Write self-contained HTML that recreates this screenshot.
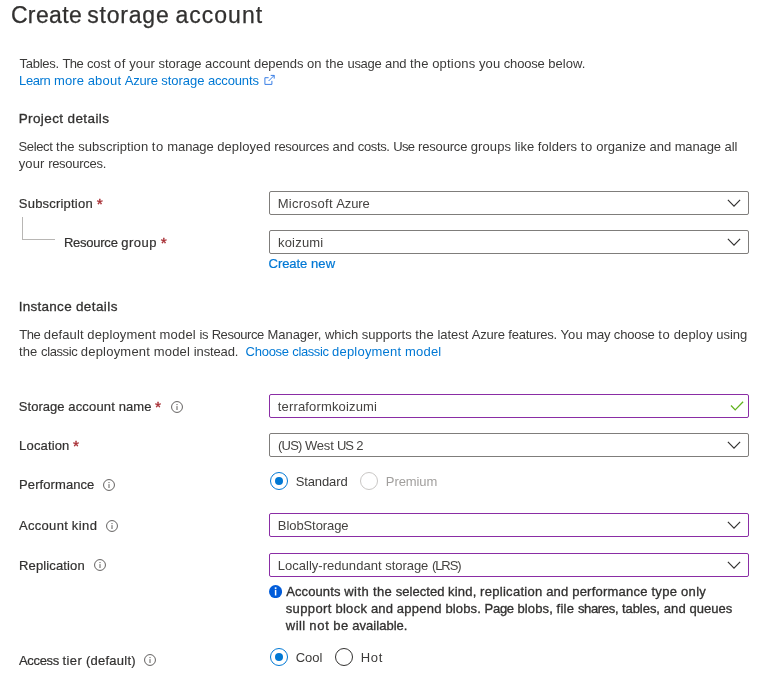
<!DOCTYPE html>
<html><head><meta charset="utf-8"><title>Create storage account</title>
<style>
html,body{margin:0;padding:0;background:#fff;}
body{width:779px;height:678px;position:relative;overflow:hidden;font-family:"Liberation Sans",sans-serif;font-size:13px;color:#3b3a39;}
#w{position:absolute;left:0;top:0;width:779px;height:678px;will-change:transform;}
.t{position:absolute;white-space:nowrap;line-height:17px;height:17px;}
.w{display:inline-block;white-space:pre;}
.h1{font-size:23px;line-height:30px;height:30px;color:#323130;-webkit-text-stroke:0.25px #323130;}
.sb{font-size:13.5px;color:#323130;-webkit-text-stroke:0.3px #323130;}
.sm{color:#323130;-webkit-text-stroke:0.32px #323130;}
.sl{-webkit-text-stroke:0.22px #0078d4;}
.lbl{color:#323130;-webkit-text-stroke:0.2px #323130;}
.a{color:#0078d4;}
.v{color:#454341;}
.req{position:absolute;color:#a4262c;-webkit-text-stroke:0.3px #a4262c;font-size:15.5px;line-height:17px;height:17px;}
.box{position:absolute;left:269px;width:478px;height:22px;border:1px solid #7f7d7b;border-radius:2px;background:#fff;}
.box.p{border-color:#8a2da5;}
.chev{position:absolute;right:7.45px;top:7.05px;width:14px;height:9px;}
.info{position:absolute;width:12px;height:12px;}
.radio{position:absolute;width:18px;height:18px;border:1px solid #323130;border-radius:50%;box-sizing:border-box;}
.radio.on{border-color:#0078d4;border-width:1.2px;}
.radio.on::after{content:"";position:absolute;left:50%;top:50%;width:8.4px;height:8.4px;margin:-4.2px 0 0 -4.2px;border-radius:50%;background:#0078d4;}
.radio.dis{border-color:#c8c6c4;}
</style></head><body><div id="w">
<div class="box" style="top:191px;"><svg class="chev" viewBox="0 0 14 9" fill="none" stroke="#323130" stroke-width="1.15"><path d="M0.9 0.8L7 7.2L13.1 0.8"/></svg></div>
<div class="box" style="top:230px;"><svg class="chev" viewBox="0 0 14 9" fill="none" stroke="#323130" stroke-width="1.15"><path d="M0.9 0.8L7 7.2L13.1 0.8"/></svg></div>
<div class="box p" style="top:394px;"><svg style="position:absolute;left:458px;top:4px" width="18" height="13" viewBox="0 0 18 13" fill="none" stroke="#62b31f" stroke-width="1.3"><path d="M3 6.5L7.2 10.9L15.1 2.8"/></svg></div>
<div class="box" style="top:433px;"><svg class="chev" viewBox="0 0 14 9" fill="none" stroke="#323130" stroke-width="1.15"><path d="M0.9 0.8L7 7.2L13.1 0.8"/></svg></div>
<div class="box p" style="top:513px;"><svg class="chev" viewBox="0 0 14 9" fill="none" stroke="#323130" stroke-width="1.15"><path d="M0.9 0.8L7 7.2L13.1 0.8"/></svg></div>
<div class="box p" style="top:553px;"><svg class="chev" viewBox="0 0 14 9" fill="none" stroke="#323130" stroke-width="1.15"><path d="M0.9 0.8L7 7.2L13.1 0.8"/></svg></div>
<div style="position:absolute;left:22px;top:217px;width:32px;height:22px;border-left:1px solid #b8b6b4;border-bottom:1px solid #b8b6b4;"></div>
<svg style="position:absolute;left:262.5px;top:74px" width="13" height="13" viewBox="0 0 13 13" fill="none" stroke="#2f78e4" stroke-width="0.95"><path d="M5.6 3.7H1.9V10.4H8.9V6.9"/><path d="M7.7 1.4H11.2V4.6"/><path d="M11.2 1.4L5.6 7"/></svg>
<div id="title" style="position:absolute;left:0;top:0;width:300px;height:30px;"><span class="t h1" id="title1" style="left:10.91px;top:0px;letter-spacing:0.351px;">Create</span> <span class="t h1" id="title2" style="left:87.26px;top:0px;letter-spacing:0.789px;">storage</span> <span class="t h1" id="title3" style="left:175.56px;top:0px;letter-spacing:0.993px;">account</span></div>
<div class="t " id="tables" style="left:19.55px;top:55px;"><span class="w" style="width:42.87px;letter-spacing:-0.270px">Tables. </span><span class="w" style="width:24.50px;letter-spacing:-0.486px">The </span><span class="w" style="width:27.08px;letter-spacing:-0.081px">cost </span><span class="w" style="width:15.23px;letter-spacing:0.416px">of </span><span class="w" style="width:29.29px;letter-spacing:0.109px">your </span><span class="w" style="width:46.63px;letter-spacing:-0.043px">storage </span><span class="w" style="width:48.88px;letter-spacing:-0.033px">account </span><span class="w" style="width:52.91px;letter-spacing:-0.077px">depends </span><span class="w" style="width:18.52px;letter-spacing:0.246px">on </span><span class="w" style="width:22.10px;letter-spacing:0.155px">the </span><span class="w" style="width:37.45px;letter-spacing:-0.305px">usage </span><span class="w" style="width:25.15px;letter-spacing:-0.036px">and </span><span class="w" style="width:22.10px;letter-spacing:0.155px">the </span><span class="w" style="width:46.82px;letter-spacing:0.192px">options </span><span class="w" style="width:24.78px;letter-spacing:0.084px">you </span><span class="w" style="width:44.43px;letter-spacing:-0.175px">choose </span><span class="w" style="letter-spacing:0.083px">below.</span></div>
<div class="t a" id="learn" style="left:19.05px;top:72px;"><span class="w" style="width:34.95px;letter-spacing:-0.372px">Learn </span><span class="w" style="width:33.68px;letter-spacing:0.123px">more </span><span class="w" style="width:37.17px;letter-spacing:0.213px">about </span><span class="w" style="width:36.48px;letter-spacing:-0.209px">Azure </span><span class="w" style="width:46.64px;letter-spacing:-0.041px">storage </span><span class="w" style="letter-spacing:-0.150px">accounts</span></div>
<div class="t sb" id="proj" style="left:18.68px;top:109.6px;"><span class="w" style="width:48.79px;letter-spacing:0.393px">Project </span><span class="w" style="letter-spacing:0.420px">details</span></div>
<div class="t " id="select" style="left:18.47px;top:138px;"><span class="w" style="width:37.65px;letter-spacing:-0.343px">Select </span><span class="w" style="width:22.14px;letter-spacing:0.166px">the </span><span class="w" style="width:73.50px;letter-spacing:0.046px">subscription </span><span class="w" style="width:15.60px;letter-spacing:0.594px">to </span><span class="w" style="width:49.83px;letter-spacing:-0.119px">manage </span><span class="w" style="width:57.16px;letter-spacing:0.102px">deployed </span><span class="w" style="width:58.26px;letter-spacing:-0.265px">resources </span><span class="w" style="width:25.20px;letter-spacing:-0.024px">and </span><span class="w" style="width:35.47px;letter-spacing:-0.344px">costs. </span><span class="w" style="width:24.83px;letter-spacing:-0.621px">Use </span><span class="w" style="width:52.74px;letter-spacing:-0.176px">resource </span><span class="w" style="width:43.89px;letter-spacing:0.096px">groups </span><span class="w" style="width:23.14px;letter-spacing:0.014px">like </span><span class="w" style="width:42.91px;letter-spacing:0.045px">folders </span><span class="w" style="width:15.60px;letter-spacing:0.594px">to </span><span class="w" style="width:53.19px;letter-spacing:-0.032px">organize </span><span class="w" style="width:25.20px;letter-spacing:-0.024px">and </span><span class="w" style="width:49.83px;letter-spacing:-0.119px">manage </span><span class="w" style="letter-spacing:-0.031px">all</span></div>
<div class="t " id="your" style="left:18.63px;top:155px;"><span class="w" style="width:29.51px;letter-spacing:0.158px">your </span><span class="w" style="letter-spacing:-0.286px">resources.</span></div>
<div class="t lbl" id="sub" style="left:18.84px;top:195px;letter-spacing:0.206px;">Subscription</div>
<div class="t lbl" id="rg" style="left:63.91px;top:234px;"><span class="w" style="width:57.37px;letter-spacing:-0.241px">Resource </span><span class="w" style="letter-spacing:0.482px">group</span></div>
<div class="t a sl" id="create" style="left:268.60px;top:255px;"><span class="w" style="width:42.29px;letter-spacing:-0.073px">Create </span><span class="w" style="letter-spacing:0.190px">new</span></div>
<div class="t sb" id="inst" style="left:18.64px;top:298px;"><span class="w" style="width:57.34px;letter-spacing:0.287px">Instance </span><span class="w" style="letter-spacing:0.403px">details</span></div>
<div class="t " id="default" style="left:19.32px;top:326px;"><span class="w" style="width:24.48px;letter-spacing:-0.494px">The </span><span class="w" style="width:43.51px;letter-spacing:0.130px">default </span><span class="w" style="width:72.30px;letter-spacing:0.153px">deployment </span><span class="w" style="width:39.89px;letter-spacing:0.183px">model </span><span class="w" style="width:12.20px;letter-spacing:-0.371px">is </span><span class="w" style="width:55.84px;letter-spacing:-0.419px">Resource </span><span class="w" style="width:57.49px;letter-spacing:-0.034px">Manager, </span><span class="w" style="width:36.74px;letter-spacing:-0.013px">which </span><span class="w" style="width:53.67px;letter-spacing:0.030px">supports </span><span class="w" style="width:22.08px;letter-spacing:0.149px">the </span><span class="w" style="width:34.38px;letter-spacing:-0.042px">latest </span><span class="w" style="width:36.43px;letter-spacing:-0.218px">Azure </span><span class="w" style="width:52.36px;letter-spacing:-0.199px">features. </span><span class="w" style="width:25.67px;letter-spacing:0.060px">You </span><span class="w" style="width:27.59px;letter-spacing:-0.175px">may </span><span class="w" style="width:44.39px;letter-spacing:-0.182px">choose </span><span class="w" style="width:15.55px;letter-spacing:0.578px">to </span><span class="w" style="width:42.59px;letter-spacing:0.121px">deploy </span><span class="w" style="letter-spacing:-0.023px">using</span></div>
<div class="t " id="classic" style="left:18.89px;top:343px;"><span class="w" style="width:22.24px;letter-spacing:0.193px">the </span><span class="w" style="width:39.72px;letter-spacing:-0.411px">classic </span><span class="w" style="width:72.81px;letter-spacing:0.202px">deployment </span><span class="w" style="width:40.18px;letter-spacing:0.235px">model </span><span class="w" style="letter-spacing:-0.127px">instead.</span></div>
<div class="t a" id="choose" style="left:245.60px;top:343px;"><span class="w" style="width:46.76px;letter-spacing:-0.272px">Choose </span><span class="w" style="width:39.72px;letter-spacing:-0.410px">classic </span><span class="w" style="width:72.83px;letter-spacing:0.203px">deployment </span><span class="w" style="letter-spacing:0.236px">model</span></div>
<div class="t lbl" id="san" style="left:18.84px;top:398px;"><span class="w" style="width:49.47px;letter-spacing:0.037px">Storage </span><span class="w" style="width:50.36px;letter-spacing:0.163px">account </span><span class="w" style="letter-spacing:0.095px">name</span></div>
<div class="t lbl" id="loc" style="left:19.11px;top:437px;letter-spacing:0.154px;">Location</div>
<div class="t lbl" id="perf" style="left:19.09px;top:476px;letter-spacing:0.085px;">Performance</div>
<div class="t " id="std" style="left:295.69px;top:473px;letter-spacing:-0.115px;">Standard</div>
<div class="t " id="prem" style="left:385.87px;top:473px;letter-spacing:-0.098px;color:#a19f9d;">Premium</div>
<div class="t lbl" id="ak" style="left:19.03px;top:517px;"><span class="w" style="width:52.78px;letter-spacing:0.299px">Account </span><span class="w" style="letter-spacing:0.441px">kind</span></div>
<div class="t lbl" id="rep" style="left:19.06px;top:557px;letter-spacing:0.135px;">Replication</div>
<div class="t sm" id="i1" style="left:286.13px;top:583px;"><span class="w" style="width:58.06px;letter-spacing:0.112px">Accounts </span><span class="w" style="width:28.77px;letter-spacing:0.492px">with </span><span class="w" style="width:22.85px;letter-spacing:0.364px">the </span><span class="w" style="width:52.34px;letter-spacing:0.030px">selected </span><span class="w" style="width:32.01px;letter-spacing:0.172px">kind, </span><span class="w" style="width:66.07px;letter-spacing:0.284px">replication </span><span class="w" style="width:26.00px;letter-spacing:0.207px">and </span><span class="w" style="width:79.23px;letter-spacing:0.233px">performance </span><span class="w" style="width:29.61px;letter-spacing:0.340px">type </span><span class="w" style="letter-spacing:0.333px">only</span></div>
<div class="t sm" id="i2" style="left:285.70px;top:600px;"><span class="w" style="width:49.73px;letter-spacing:0.383px">support </span><span class="w" style="width:35.48px;letter-spacing:0.291px">block </span><span class="w" style="width:25.94px;letter-spacing:0.189px">and </span><span class="w" style="width:48.69px;letter-spacing:0.272px">append </span><span class="w" style="width:39.10px;letter-spacing:0.121px">blobs. </span><span class="w" style="width:32.87px;letter-spacing:-0.294px">Page </span><span class="w" style="width:39.10px;letter-spacing:0.121px">blobs, </span><span class="w" style="width:21.35px;letter-spacing:0.265px">file </span><span class="w" style="width:44.00px;letter-spacing:-0.330px">shares, </span><span class="w" style="width:41.74px;letter-spacing:-0.035px">tables, </span><span class="w" style="width:25.94px;letter-spacing:0.189px">and </span><span class="w" style="letter-spacing:0.012px">queues</span></div>
<div class="t sm" id="i3" style="left:285.84px;top:617px;"><span class="w" style="width:23.47px;letter-spacing:0.418px">will </span><span class="w" style="width:24.05px;letter-spacing:0.746px">not </span><span class="w" style="width:18.87px;letter-spacing:0.335px">be </span><span class="w" style="letter-spacing:0.038px">available.</span></div>
<div class="t lbl" id="at" style="left:19.03px;top:652px;"><span class="w" style="width:43.56px;letter-spacing:-0.343px">Access </span><span class="w" style="width:23.38px;letter-spacing:0.403px">tier </span><span class="w" style="letter-spacing:0.246px">(default)</span></div>
<div class="t " id="cool" style="left:295.82px;top:649px;letter-spacing:-0.095px;">Cool</div>
<div class="t " id="hot" style="left:360.68px;top:649px;letter-spacing:0.740px;">Hot</div>
<div class="t v" id="v1" style="left:277.80px;top:195px;"><span class="w" style="width:58.54px;letter-spacing:0.246px">Microsoft </span><span class="w" style="letter-spacing:-0.159px">Azure</span></div>
<div class="t v" id="v2" style="left:277.95px;top:234px;letter-spacing:0.208px;">koizumi</div>
<div class="t v" id="v3" style="left:277.84px;top:398px;letter-spacing:0.155px;">terraformkoizumi</div>
<div class="t v" id="v4" style="left:278.07px;top:437px;"><span class="w" style="width:26.96px;letter-spacing:-0.821px">(US) </span><span class="w" style="width:32.08px;letter-spacing:-0.208px">West </span><span class="w" style="width:19.19px;letter-spacing:-1.196px">US </span><span class="w" style="letter-spacing:-0.298px">2</span></div>
<div class="t v" id="v5" style="left:277.86px;top:517px;letter-spacing:-0.088px;">BlobStorage</div>
<div class="t v" id="v6" style="left:277.65px;top:557px;"><span class="w" style="width:107.52px;letter-spacing:0.035px">Locally-redundant </span><span class="w" style="width:46.74px;letter-spacing:-0.029px">storage </span><span class="w" style="letter-spacing:-1.055px">(LRS)</span></div>
<div class="req" id="req96" style="left:96.8px;top:194.5px;">*</div>
<div class="req" id="req160" style="left:160.7px;top:233.5px;">*</div>
<div class="req" id="req154" style="left:154.9px;top:397.5px;">*</div>
<div class="req" id="req73" style="left:73.0px;top:436.5px;">*</div>
<svg class="info" style="left:170.6px;top:401.1px" viewBox="0 0 12 12"><circle cx="6" cy="6" r="5.45" fill="none" stroke="#484644" stroke-width="0.85"/><rect x="5.5" y="5.1" width="1" height="3.9" fill="#605e5c"/><rect x="5.5" y="3" width="1" height="1.1" fill="#605e5c"/></svg><svg class="info" style="left:103.1px;top:478.9px" viewBox="0 0 12 12"><circle cx="6" cy="6" r="5.45" fill="none" stroke="#484644" stroke-width="0.85"/><rect x="5.5" y="5.1" width="1" height="3.9" fill="#605e5c"/><rect x="5.5" y="3" width="1" height="1.1" fill="#605e5c"/></svg><svg class="info" style="left:105.6px;top:519.5px" viewBox="0 0 12 12"><circle cx="6" cy="6" r="5.45" fill="none" stroke="#484644" stroke-width="0.85"/><rect x="5.5" y="5.1" width="1" height="3.9" fill="#605e5c"/><rect x="5.5" y="3" width="1" height="1.1" fill="#605e5c"/></svg><svg class="info" style="left:93.9px;top:559.4px" viewBox="0 0 12 12"><circle cx="6" cy="6" r="5.45" fill="none" stroke="#484644" stroke-width="0.85"/><rect x="5.5" y="5.1" width="1" height="3.9" fill="#605e5c"/><rect x="5.5" y="3" width="1" height="1.1" fill="#605e5c"/></svg><svg class="info" style="left:144.1px;top:653.75px" viewBox="0 0 12 12"><circle cx="6" cy="6" r="5.45" fill="none" stroke="#484644" stroke-width="0.85"/><rect x="5.5" y="5.1" width="1" height="3.9" fill="#605e5c"/><rect x="5.5" y="3" width="1" height="1.1" fill="#605e5c"/></svg><svg style="position:absolute;left:268.9px;top:584.9px" width="13.1" height="13.1" viewBox="0 0 13 13"><circle cx="6.5" cy="6.5" r="6.5" fill="#015cda"/><rect x="5.8" y="4.8" width="1.5" height="5.6" fill="#fff"/><rect x="5.7" y="2.3" width="1.7" height="1.6" fill="#fff"/></svg>
<div class="radio on" style="left:270px;top:472px;"></div><div class="radio dis" style="left:360px;top:472px;"></div>
<div class="radio on" style="left:270px;top:648px;"></div><div class="radio" style="left:335px;top:648px;"></div>
</div></body></html>
